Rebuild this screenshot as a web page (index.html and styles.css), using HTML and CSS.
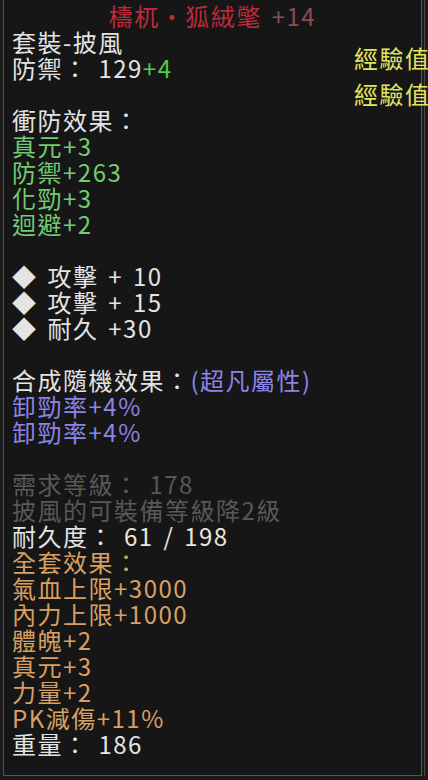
FILE: index.html
```html
<!DOCTYPE html>
<html lang="zh-Hant">
<head>
<meta charset="utf-8">
<title>狐絨氅</title>
<link rel="stylesheet" href="styles.css">
</head>
<body>
<div class="frame">
  <div class="panel">
    <div class="title"><span class="red">檮杌·狐絨氅</span> <span class="dimred">+14</span></div>
    <div class="content">
      <section class="block">
        <p class="w">套裝-披風</p>
        <p class="w">防禦： 129<span class="g2">+4</span></p>
      </section>
      <section class="block">
        <p class="w">衝防效果：</p>
        <p class="g">真元+3</p>
        <p class="g">防禦+263</p>
        <p class="g">化勁+3</p>
        <p class="g">迴避+2</p>
      </section>
      <section class="block">
        <p class="w">◆ 攻擊 + 10</p>
        <p class="w">◆ 攻擊 + 15</p>
        <p class="w">◆ 耐久 +30</p>
      </section>
      <section class="block">
        <p class="w">合成隨機效果：<span class="p">(超凡屬性)</span></p>
        <p class="p">卸勁率+4%</p>
        <p class="p">卸勁率+4%</p>
      </section>
      <section class="block">
        <p class="grey">需求等級： 178</p>
        <p class="grey">披風的可裝備等級降2級</p>
        <p class="w">耐久度： <span class="cream">61 / 198</span></p>
        <p class="o">全套效果：</p>
        <p class="o">氣血上限+3000</p>
        <p class="o">內力上限+1000</p>
        <p class="o">體魄+2</p>
        <p class="o">真元+3</p>
        <p class="o">力量+2</p>
        <p class="o">PK減傷+11%</p>
        <p class="w">重量： 186</p>
      </section>
    </div>
  </div>
  <div class="exp">
    <p>經驗值</p>
    <p>經驗值</p>
  </div>
</div>
</body>
</html>
```

FILE: styles.css
```css
html, body {
  margin: 0;
  padding: 0;
}
body {
  width: 428px;
  height: 780px;
  overflow: hidden;
  background: #1b1b1b;
  font-family: "Noto Sans CJK TC", "Noto Sans CJK SC", sans-serif;
  font-size: 24px;
  letter-spacing: 1.5px;
  word-spacing: 3px;
}
p {
  margin: 0;
  height: 26px;
  line-height: 26px;
  white-space: nowrap;
}
.frame {
  position: relative;
  box-sizing: border-box;
  margin-left: 3px;
  width: 422px;
  padding-right: 2px;
  border-right: 1px solid #4a4a4a;
}
.panel {
  box-sizing: border-box;
  width: 419px;
  background: #161616;
  border-left: 1px solid #505050;
  border-right: 1px solid #5a5a5a;
  border-bottom: 1px solid #555555;
  padding: 3px 0 18px 8px;
}
.title {
  height: 26px;
  line-height: 26px;
  text-align: center;
  padding-right: 8px;
  white-space: nowrap;
}
.red { color: #bd2a3a; }
.dimred { color: #8a4c52; }
.content {
  margin-top: 0;
}
.block + .block {
  margin-top: 26px;
}
.w { color: #e4e4e4; }
.cream { color: #efe6d8; }
.g { color: #72cc72; }
.g2 { color: #4ad04a; }
.p { color: #8c84e8; }
.grey { color: #585858; }
.o { color: #d9a062; }
.exp {
  position: absolute;
  left: 351px;
  top: 45px;
  display: flex;
  flex-direction: column;
  gap: 10px;
  color: #e4e45e;
}
```
